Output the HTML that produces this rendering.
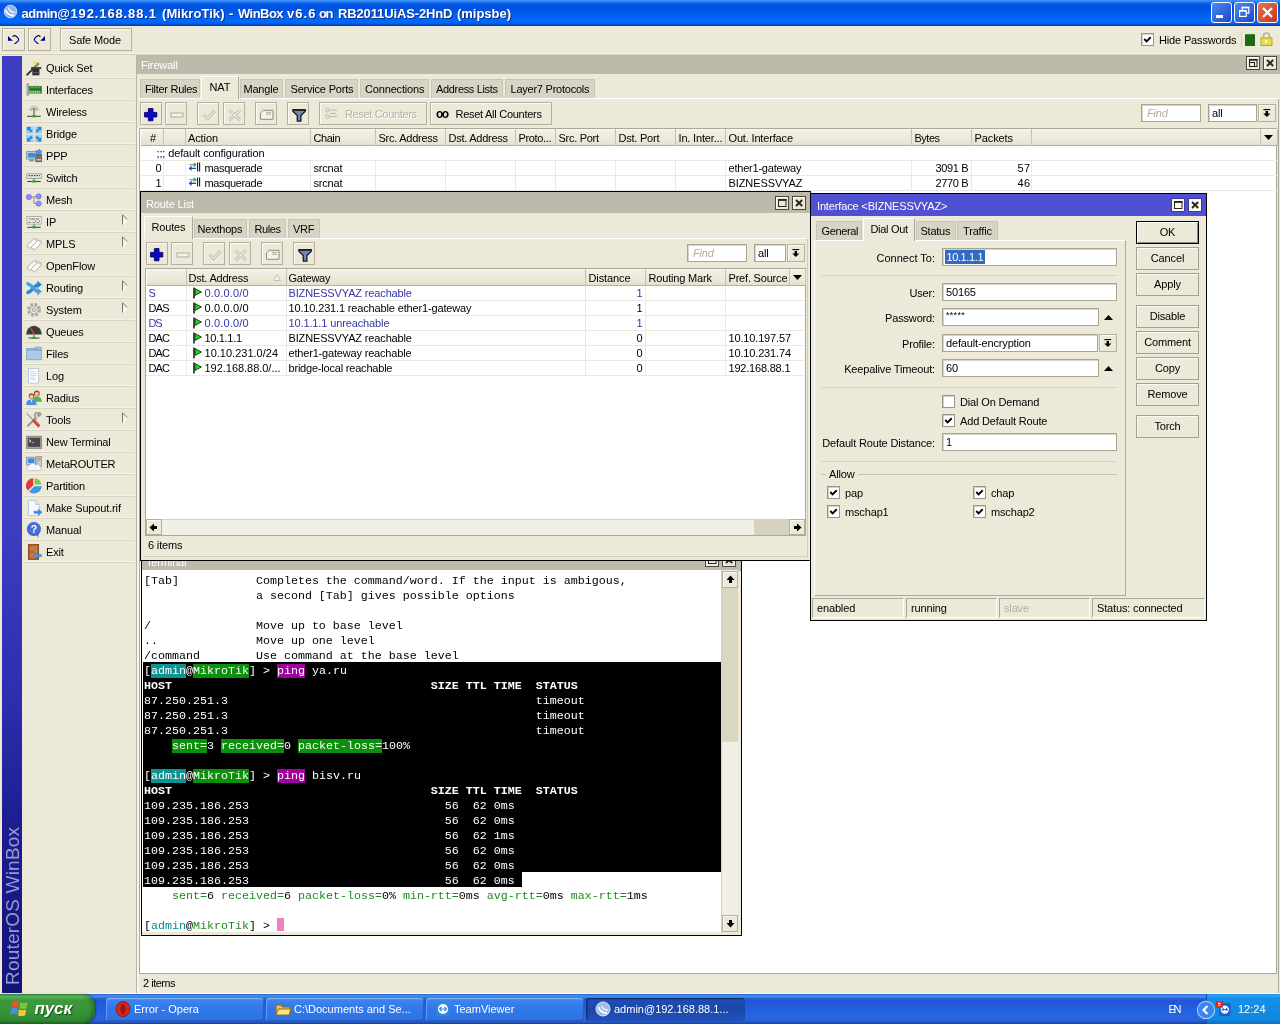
<!DOCTYPE html>
<html><head><meta charset='utf-8'><title>WinBox</title><style>
*{box-sizing:border-box;margin:0;padding:0}
html,body{width:1280px;height:1024px;overflow:hidden;background:#ECE9D8}
body{font-family:"Liberation Sans",sans-serif;font-size:11px;letter-spacing:-0.15px;color:#000;position:relative}
.a{position:absolute;white-space:nowrap}
.t{position:absolute;white-space:nowrap;line-height:14px;height:14px}
.btn{position:absolute;background:#ECE9D8;border:1px solid;border-color:#fff #8E8B7C #8E8B7C #fff;box-shadow:0 0 0 1px #ACA899 inset}
.btn2{position:absolute;background:#ECE9D8;border:1px solid #B3B0A0;box-shadow:inset 1px 1px 0 #FBFAF5}
.inp{position:absolute;background:#fff;border:1px solid #A8A595;box-shadow:inset 1px 1px 0 #d8d5c6}
.tab{position:absolute;background:#D8D4C4;border:1px solid #C9C5B4;border-bottom:none;text-align:center;line-height:17px;color:#000}
.tabA{position:absolute;background:#ECE9D8;border:1px solid #fff;border-right-color:#ACA899;border-bottom:none;text-align:center;line-height:18px}
.hdr{position:absolute;height:17px;background:linear-gradient(#FBFAF4 0,#F1EFE3 2px,#ECE9D8 65%,#E3E0CF 100%);border-right:1px solid #C5C2B2;border-bottom:1px solid #B5B2A3;line-height:17px;padding-left:3px;white-space:nowrap;overflow:hidden}
.mono{font-family:"Liberation Mono",monospace;font-size:11.667px;letter-spacing:0}
.wt{position:absolute;color:#fff;line-height:18px;white-space:nowrap}
.cb{position:absolute;width:13px;height:13px;background:#fff;border:1px solid #97948A;box-shadow:inset 1px 1px 0 #d5d2c6}
</style></head><body><div id='root' style='position:absolute;left:0;top:0;width:1280px;height:1024px;overflow:hidden;will-change:transform'>
<div class='a' style='left:0px;top:0px;width:1280px;height:26px;background:linear-gradient(to bottom,#3D95FF 0px,#2A80F5 2px,#0A5CE0 3.5px,#0054E3 6px,#0054E3 10px,#0160F2 15px,#0468FA 20px,#0365F5 23px,#0340B8 25.5px,#0340B8 26px)'></div>
<div class='a' style='left:0px;top:26px;width:1280px;height:1px;background:#F8F7FC'></div>
<svg class='a' style='left:2px;top:3px' width='18' height='18' viewBox='0 0 18 18'><circle cx='8.5' cy='8.5' r='6.3' fill='#8DB3EA' stroke='#C9DCF5' stroke-width='1'/><path d='M3.5 7 Q5.5 12.5 12 12.5' stroke='#fff' stroke-width='1.8' fill='none'/><path d='M6.5 4.5 Q7.5 9.5 13.5 9.5' stroke='#eaf1fb' stroke-width='1.4' fill='none'/></svg>
<div class='t' style='left:21.5px;top:6px;font-size:13px;letter-spacing:-0.492px;font-weight:bold;color:#fff;line-height:16px;height:16px;text-shadow:1px 1px 0 #0b2f8a;'>admin@</div>
<div class='t' style='left:70.5px;top:6px;font-size:13px;letter-spacing:0.872px;font-weight:bold;color:#fff;line-height:16px;height:16px;text-shadow:1px 1px 0 #0b2f8a;'>192.168.88.1</div>
<div class='t' style='left:162px;top:6px;font-size:13px;letter-spacing:0.069px;font-weight:bold;color:#fff;line-height:16px;height:16px;text-shadow:1px 1px 0 #0b2f8a;'>(MikroTik)</div>
<div class='t' style='left:229px;top:6px;font-size:13px;letter-spacing:1.171px;font-weight:bold;color:#fff;line-height:16px;height:16px;text-shadow:1px 1px 0 #0b2f8a;'>-</div>
<div class='t' style='left:238px;top:6px;font-size:13px;letter-spacing:-0.554px;font-weight:bold;color:#fff;line-height:16px;height:16px;text-shadow:1px 1px 0 #0b2f8a;'>WinBox</div>
<div class='t' style='left:287px;top:6px;font-size:13px;letter-spacing:1.066px;font-weight:bold;color:#fff;line-height:16px;height:16px;text-shadow:1px 1px 0 #0b2f8a;'>v6.6</div>
<div class='t' style='left:319px;top:6px;font-size:13px;letter-spacing:-1.382px;font-weight:bold;color:#fff;line-height:16px;height:16px;text-shadow:1px 1px 0 #0b2f8a;'>on</div>
<div class='t' style='left:338px;top:6px;font-size:13px;letter-spacing:-0.130px;font-weight:bold;color:#fff;line-height:16px;height:16px;text-shadow:1px 1px 0 #0b2f8a;'>RB2011UiAS-2HnD</div>
<div class='t' style='left:457px;top:6px;font-size:13px;letter-spacing:-0.024px;font-weight:bold;color:#fff;line-height:16px;height:16px;text-shadow:1px 1px 0 #0b2f8a;'>(mipsbe)</div>
<div class='a' style='left:1211px;top:2px;width:21px;height:21px;border:1px solid #fff;border-radius:3px;background:linear-gradient(135deg,#4C8AF0,#1E47C8)'><svg width='19' height='19' viewBox='0 0 19 19' style='position:absolute;left:0;top:0'><rect x='4' y='12' width='7' height='3' fill='#fff'/></svg></div>
<div class='a' style='left:1234px;top:2px;width:21px;height:21px;border:1px solid #fff;border-radius:3px;background:linear-gradient(135deg,#4C8AF0,#1E47C8)'><svg width='19' height='19' viewBox='0 0 19 19' style='position:absolute;left:0;top:0'><path d='M7.2 7V4.6h6.6v5.6h-2.4' fill='none' stroke='#fff' stroke-width='1.2'/><path d='M6.6 4.4h7.8' stroke='#fff' stroke-width='1.6'/><rect x='4.6' y='7.8' width='6.6' height='5.6' fill='none' stroke='#fff' stroke-width='1.2'/><path d='M4 7.8h7.8' stroke='#fff' stroke-width='1.6'/></svg></div>
<div class='a' style='left:1257px;top:2px;width:21px;height:21px;border:1px solid #fff;border-radius:3px;background:linear-gradient(135deg,#E8754F,#C4361A)'><svg width='19' height='19' viewBox='0 0 19 19' style='position:absolute;left:0;top:0'><path d='M5 5 L14 14 M14 5 L5 14' stroke='#fff' stroke-width='2.2'/></svg></div>
<div class='a' style='left:0px;top:26px;width:1280px;height:29px;background:#ECE9D8'></div>
<div class='a' style='left:0px;top:54px;width:1280px;height:1px;background:#D2CFBF'></div>
<div class='a' style='left:0px;top:53px;width:1280px;height:1px;background:#F6F4EA'></div>
<div class='btn2' style='left:2px;top:28px;width:23px;height:23px;'></div>
<div class='btn2' style='left:28px;top:28px;width:23px;height:23px;'></div>
<div class='btn2' style='left:60px;top:28px;width:72px;height:23px;'></div>
<svg class='a' style='left:6px;top:33px' width='14' height='14' viewBox='0 0 14 14'><path d='M2 3v4.8h4.8z' fill='#000080'/><path d='M6.6 3.7Q8.5 1.6 10.6 3.7L12.2 5.4Q13.2 6.6 12.2 7.8L9.4 10.5h-1' fill='none' stroke='#000080' stroke-width='1.15'/></svg>
<svg class='a' style='left:32px;top:33px' width='14' height='14' viewBox='0 0 14 14'><path d='M13 3v4.8H8.2z' fill='#000080'/><path d='M8.4 3.7Q6.5 1.6 4.4 3.7L2.8 5.4Q1.8 6.6 2.8 7.8L5.6 10.5h1' fill='none' stroke='#000080' stroke-width='1.15'/></svg>
<div class='t' style='left:69px;top:33px;'>Safe Mode</div>
<div class='cb' style='left:1141px;top:33px'><svg width='11' height='11' viewBox='0 0 12 12' style='position:absolute;left:0;top:0'><path d='M2.5 5.5 L5 8 L9.5 3.5' fill='none' stroke='#000' stroke-width='2.1'/></svg></div>
<div class='t' style='left:1159px;top:33px;'>Hide Passwords</div>
<div class='a' style='left:1241px;top:31px;width:1px;height:17px;background:#D5D2C2'></div>
<div class='a' style='left:1245px;top:34px;width:10px;height:12px;background:#1E6A12;border-top:1px solid #3c8a2c'></div>
<svg class='a' style='left:1260px;top:32px' width='13' height='14' viewBox='0 0 13 14'><path d='M3.5 6 V4 A3 3 0 0 1 9.5 4 V6' fill='none' stroke='#b9b48a' stroke-width='1.6'/><rect x='1' y='6' width='11' height='7.5' fill='#E9DE4A' stroke='#b5a62a' stroke-width='1'/><rect x='5' y='8' width='2' height='3' fill='#fff8c0'/></svg>
<div class='a' style='left:0px;top:55px;width:137px;height:939px;background:#ECE9D8'></div>
<div class='a' style='left:2px;top:56px;width:20px;height:937px;background:linear-gradient(#3D3DC0 0%,#3D3DC0 50%,#2E2EB0 68%,#1D1D92 82%,#13137A 100%)'></div>
<div class='a' style='left:2px;top:993px;width:0;height:0'><div style='position:absolute;transform-origin:0 0;transform:rotate(-90deg);left:2px;top:-8px;font-size:19px;letter-spacing:0.2px;color:#9A9CCB;white-space:nowrap;line-height:18px'>RouterOS WinBox</div></div>
<div class='a' style='left:136px;top:55px;width:1px;height:939px;background:#B8B5A6'></div>
<div class='a' style='left:24px;top:78px;width:111px;height:1px;background:#D9D6C6'></div>
<div class='a' style='left:24px;top:77px;width:111px;height:1px;background:#F3F1E6'></div>
<svg class='a' style='left:26px;top:60px' width='16' height='16' viewBox='0 0 16 16'><path d='M6.3 8.5h7.1v6.8h-7.1z' fill='#2e2e2e'/><path d='M6.3 12h7.1v1.2h-7.1z' fill='#5a5a5a'/><path d='M5 7.2h10.3v1.6H5z' fill='#222'/><path d='M0.6 15.2L12.6 3.2' stroke='#3a3a32' stroke-width='2'/><path d='M8.5 7.3L12.6 3.2' stroke='#8a8468' stroke-width='2'/><path d='M9 0l.8 1.8 1.9.3-1.4 1.3.3 1.9L9 4.4l-1.6.9.3-1.9L6.3 2.1l1.9-.3z' fill='#f0e060'/><circle cx='13.2' cy='1.5' r='0.8' fill='#f5ee9a'/></svg>
<div class='t' style='left:46px;top:61px;'>Quick Set</div>
<div class='a' style='left:24px;top:100px;width:111px;height:1px;background:#D9D6C6'></div>
<div class='a' style='left:24px;top:99px;width:111px;height:1px;background:#F3F1E6'></div>
<svg class='a' style='left:26px;top:82px' width='16' height='16' viewBox='0 0 16 16'><path d='M0.9 1.7h1.8v11.6H0.9z' fill='#b9b9b2' stroke='#8a8a84' stroke-width='0.6'/><path d='M2.7 3.9H16v7.7H2.7z' fill='#3f9a3f'/><path d='M3.7 5h11.3v3.6H3.7z' fill='#2c6e2c'/><path d='M4.2 8.9v1.8M6 8.9v1.8M7.8 8.9v1.8M9.6 8.9v1.8M11.4 8.9v1.8M13.2 8.9v1.8' stroke='#b5e3b0' stroke-width='1'/><path d='M5 5.6h2M8.4 5.6h2M11.8 5.6h2' stroke='#6fb56f' stroke-width='1.2'/></svg>
<div class='t' style='left:46px;top:83px;'>Interfaces</div>
<div class='a' style='left:24px;top:122px;width:111px;height:1px;background:#D9D6C6'></div>
<div class='a' style='left:24px;top:121px;width:111px;height:1px;background:#F3F1E6'></div>
<svg class='a' style='left:26px;top:104px' width='16' height='16' viewBox='0 0 16 16'><path d='M3 6.2Q8 -1.2 13 6.2' fill='none' stroke='#c4c4bc' stroke-width='1.3'/><path d='M5 6.6Q8 2.2 11 6.6' fill='none' stroke='#9a9a92' stroke-width='1.2'/><path d='M8 4.5v7' stroke='#7c7c74' stroke-width='1.5'/><path d='M1.2 12.3h13.5' stroke='#3c3c34' stroke-width='1'/><ellipse cx='8' cy='12.2' rx='2.6' ry='1.3' fill='#35a535'/></svg>
<div class='t' style='left:46px;top:105px;'>Wireless</div>
<div class='a' style='left:24px;top:144px;width:111px;height:1px;background:#D9D6C6'></div>
<div class='a' style='left:24px;top:143px;width:111px;height:1px;background:#F3F1E6'></div>
<svg class='a' style='left:26px;top:126px' width='16' height='16' viewBox='0 0 16 16'><rect x='0.2' y='0.4' width='7.2' height='7.2' fill='#9ad0f7'/><rect x='8.8' y='0.4' width='7.2' height='7.2' fill='#9ad0f7'/><rect x='0.2' y='8.8' width='7.2' height='7.2' fill='#9ad0f7'/><rect x='8.8' y='8.8' width='7.2' height='7.2' fill='#9ad0f7'/><path d='M1 1h4L3.8 2.3 6.6 5 5 6.6 2.3 3.8 1 5z' fill='#2b86d6'/><path d='M15.2 1v4L13.9 3.8 11.2 6.6 9.6 5 12.4 2.3 11.2 1z' fill='#2b86d6'/><path d='M1 15.4v-4l1.3 1.2L5 9.8 6.6 11.4 3.8 14.1 5 15.4z' fill='#2b86d6'/><path d='M15.2 15.4h-4l1.2-1.3L9.6 11.4 11.2 9.8 13.9 12.6 15.2 11.4z' fill='#2b86d6'/></svg>
<div class='t' style='left:46px;top:127px;'>Bridge</div>
<div class='a' style='left:24px;top:166px;width:111px;height:1px;background:#D9D6C6'></div>
<div class='a' style='left:24px;top:165px;width:111px;height:1px;background:#F3F1E6'></div>
<svg class='a' style='left:26px;top:148px' width='16' height='16' viewBox='0 0 16 16'><rect x='0.6' y='3.6' width='9.6' height='7.4' fill='#d6dbe2' stroke='#7c8794' stroke-width='0.8'/><rect x='1.8' y='4.8' width='7.2' height='4.8' fill='#3c8ce0'/><rect x='3.2' y='11.2' width='4.6' height='2.2' fill='#8a8f96'/><rect x='9.8' y='6' width='6' height='7.8' fill='#6d7278' stroke='#4a4e54' stroke-width='0.6'/><rect x='10.6' y='11' width='4.4' height='1.4' fill='#c9ccd0'/><path d='M10 5V2.6h3V1l3 2.8-3 2.8V5z' fill='#4a9af0' stroke='#2a6cc0' stroke-width='0.5'/></svg>
<div class='t' style='left:46px;top:149px;'>PPP</div>
<div class='a' style='left:24px;top:188px;width:111px;height:1px;background:#D9D6C6'></div>
<div class='a' style='left:24px;top:187px;width:111px;height:1px;background:#F3F1E6'></div>
<svg class='a' style='left:26px;top:170px' width='16' height='16' viewBox='0 0 16 16'><rect x='0.9' y='3.9' width='14.4' height='4.5' fill='#f4f4f0' stroke='#9a9a92' stroke-width='0.9'/><path d='M2.6 5.6h1.6M5.2 5.6h1.6M7.8 5.6h1.6M10.4 5.6h1.6M13 5.6h1' stroke='#44443c' stroke-width='1.3'/><path d='M2.6 7.2h11' stroke='#d0d0c8' stroke-width='0.8'/><path d='M8 8.6v2.4' stroke='#7c7c74' stroke-width='1.3'/><path d='M1.2 11.5h13.5' stroke='#3c3c34' stroke-width='1'/><ellipse cx='8' cy='11.5' rx='2.4' ry='1.2' fill='#35a535'/></svg>
<div class='t' style='left:46px;top:171px;'>Switch</div>
<div class='a' style='left:24px;top:210px;width:111px;height:1px;background:#D9D6C6'></div>
<div class='a' style='left:24px;top:209px;width:111px;height:1px;background:#F3F1E6'></div>
<svg class='a' style='left:26px;top:192px' width='16' height='16' viewBox='0 0 16 16'><path d='M5 5h3v6.5h2.4M8 4.6h2.6' fill='none' stroke='#8a8a84' stroke-width='1'/><circle cx='2.9' cy='5' r='2.6' fill='#8e8ef4' stroke='#6c6cd6' stroke-width='0.7'/><circle cx='12.6' cy='4.4' r='2.6' fill='#8e8ef4' stroke='#6c6cd6' stroke-width='0.7'/><circle cx='12.6' cy='11.6' r='2.6' fill='#8e8ef4' stroke='#6c6cd6' stroke-width='0.7'/></svg>
<div class='t' style='left:46px;top:193px;'>Mesh</div>
<div class='a' style='left:24px;top:232px;width:111px;height:1px;background:#D9D6C6'></div>
<div class='a' style='left:24px;top:231px;width:111px;height:1px;background:#F3F1E6'></div>
<svg class='a' style='left:26px;top:214px' width='16' height='16' viewBox='0 0 16 16'><rect x='0.9' y='2.6' width='14.4' height='7.5' fill='#f6f6f2' stroke='#a4a49c' stroke-width='0.9'/><text x='8.1' y='9' font-size='7.2' text-anchor='middle' font-family='Liberation Sans' fill='#6a6a64' letter-spacing='0'>255</text><path d='M8 10.3v2.6' stroke='#7c7c74' stroke-width='1.3'/><path d='M1.2 13.3h13.5' stroke='#3c3c34' stroke-width='1'/><ellipse cx='8' cy='13.3' rx='2.4' ry='1.2' fill='#35a535'/></svg>
<div class='t' style='left:46px;top:215px;'>IP</div>
<svg class='a' style='left:121px;top:214px' width='7' height='12' viewBox='0 0 7 12'><path d='M1.5 1L1.5 10.5L6 5.7Z' fill='#F6F4EA'/><path d='M1.5 10.8L6.2 5.8' stroke='#fff' stroke-width='1.1'/><path d='M1.5 10.6V0.8L6.2 5.6' fill='none' stroke='#76736a' stroke-width='1'/></svg>
<div class='a' style='left:24px;top:254px;width:111px;height:1px;background:#D9D6C6'></div>
<div class='a' style='left:24px;top:253px;width:111px;height:1px;background:#F3F1E6'></div>
<svg class='a' style='left:26px;top:236px' width='16' height='16' viewBox='0 0 16 16'><path d='M0.9 9.7L8.2 2.5l3 1v2L4.4 12.6z' fill='#fbfbf8' stroke='#a8a8a0' stroke-width='0.9'/><path d='M5 11.2L12.3 4l3 1v2L8.5 14.1z' fill='#fbfbf8' stroke='#a8a8a0' stroke-width='0.9'/><circle cx='9.6' cy='4.2' r='0.7' fill='#c8c8c0'/><circle cx='13.6' cy='5.7' r='0.7' fill='#c8c8c0'/></svg>
<div class='t' style='left:46px;top:237px;'>MPLS</div>
<svg class='a' style='left:121px;top:236px' width='7' height='12' viewBox='0 0 7 12'><path d='M1.5 1L1.5 10.5L6 5.7Z' fill='#F6F4EA'/><path d='M1.5 10.8L6.2 5.8' stroke='#fff' stroke-width='1.1'/><path d='M1.5 10.6V0.8L6.2 5.6' fill='none' stroke='#76736a' stroke-width='1'/></svg>
<div class='a' style='left:24px;top:276px;width:111px;height:1px;background:#D9D6C6'></div>
<div class='a' style='left:24px;top:275px;width:111px;height:1px;background:#F3F1E6'></div>
<svg class='a' style='left:26px;top:258px' width='16' height='16' viewBox='0 0 16 16'><path d='M0.9 9.7L8.2 2.5l3 1v2L4.4 12.6z' fill='#fbfbf8' stroke='#a8a8a0' stroke-width='0.9'/><path d='M5 11.2L12.3 4l3 1v2L8.5 14.1z' fill='#fbfbf8' stroke='#a8a8a0' stroke-width='0.9'/><circle cx='9.6' cy='4.2' r='0.7' fill='#c8c8c0'/><circle cx='13.6' cy='5.7' r='0.7' fill='#c8c8c0'/></svg>
<div class='t' style='left:46px;top:259px;'>OpenFlow</div>
<div class='a' style='left:24px;top:298px;width:111px;height:1px;background:#D9D6C6'></div>
<div class='a' style='left:24px;top:297px;width:111px;height:1px;background:#F3F1E6'></div>
<svg class='a' style='left:26px;top:280px' width='16' height='16' viewBox='0 0 16 16'><path d='M0.5 12.6C6 12.6 8 4.6 12.4 4.6' fill='none' stroke='#2c86d8' stroke-width='3.4'/><path d='M11.2 0.8L16 4.6 11.2 8.4z' fill='#2c86d8'/><path d='M0.5 3.6C6 3.6 8 11.6 12.4 11.6' fill='none' stroke='#46a0ea' stroke-width='3.4'/><path d='M11.2 7.8L16 11.6 11.2 15.4z' fill='#46a0ea'/></svg>
<div class='t' style='left:46px;top:281px;'>Routing</div>
<svg class='a' style='left:121px;top:280px' width='7' height='12' viewBox='0 0 7 12'><path d='M1.5 1L1.5 10.5L6 5.7Z' fill='#F6F4EA'/><path d='M1.5 10.8L6.2 5.8' stroke='#fff' stroke-width='1.1'/><path d='M1.5 10.6V0.8L6.2 5.6' fill='none' stroke='#76736a' stroke-width='1'/></svg>
<div class='a' style='left:24px;top:320px;width:111px;height:1px;background:#D9D6C6'></div>
<div class='a' style='left:24px;top:319px;width:111px;height:1px;background:#F3F1E6'></div>
<svg class='a' style='left:26px;top:302px' width='16' height='16' viewBox='0 0 16 16'><circle cx='8' cy='7.8' r='5.4' fill='none' stroke='#a9a9a4' stroke-width='3.2' stroke-dasharray='2.6 1.64'/><circle cx='8' cy='7.8' r='4.6' fill='#b4b4ae'/><circle cx='8' cy='7.8' r='3.4' fill='#e9e9e4'/><circle cx='8' cy='7.8' r='1.7' fill='#ECE9D8' stroke='#9a9a94' stroke-width='0.9'/></svg>
<div class='t' style='left:46px;top:303px;'>System</div>
<svg class='a' style='left:121px;top:302px' width='7' height='12' viewBox='0 0 7 12'><path d='M1.5 1L1.5 10.5L6 5.7Z' fill='#F6F4EA'/><path d='M1.5 10.8L6.2 5.8' stroke='#fff' stroke-width='1.1'/><path d='M1.5 10.6V0.8L6.2 5.6' fill='none' stroke='#76736a' stroke-width='1'/></svg>
<div class='a' style='left:24px;top:342px;width:111px;height:1px;background:#D9D6C6'></div>
<div class='a' style='left:24px;top:341px;width:111px;height:1px;background:#F3F1E6'></div>
<svg class='a' style='left:26px;top:324px' width='16' height='16' viewBox='0 0 16 16'><path d='M0.2 10.4A7.8 8.6 0 0 1 15.8 10.4z' fill='#3a3a38'/><path d='M1.5 9.2A6.5 7 0 0 1 14.5 9.2' fill='none' stroke='#6a6a66' stroke-width='0.8' stroke-dasharray='1 1.4'/><path d='M8 10L5 4.5' stroke='#e24a3a' stroke-width='1.2'/><path d='M8 10.6v2.6' stroke='#7c7c74' stroke-width='1.3'/><path d='M2.5 14h11' stroke='#3c3c34' stroke-width='1'/><ellipse cx='8' cy='13.9' rx='2.4' ry='1.2' fill='#35a535'/></svg>
<div class='t' style='left:46px;top:325px;'>Queues</div>
<div class='a' style='left:24px;top:364px;width:111px;height:1px;background:#D9D6C6'></div>
<div class='a' style='left:24px;top:363px;width:111px;height:1px;background:#F3F1E6'></div>
<svg class='a' style='left:26px;top:346px' width='16' height='16' viewBox='0 0 16 16'><path d='M9 1h6.4v3H9z' fill='#9dbfe4' stroke='#7ea2cc' stroke-width='0.6'/><path d='M0.3 2.6h9l1.2 1.4h5.2v9.7H0.3z' fill='#8fb4de' stroke='#6f94c2' stroke-width='0.7'/><path d='M0.7 5h14.6v8.3H0.7z' fill='#a9c8ea'/></svg>
<div class='t' style='left:46px;top:347px;'>Files</div>
<div class='a' style='left:24px;top:386px;width:111px;height:1px;background:#D9D6C6'></div>
<div class='a' style='left:24px;top:385px;width:111px;height:1px;background:#F3F1E6'></div>
<svg class='a' style='left:26px;top:368px' width='16' height='16' viewBox='0 0 16 16'><path d='M2.4 0.5h10.2v14.3l-1.3 0.9-1.3-0.9-1.3 0.9-1.3-0.9-1.3 0.9-1.3-0.9-1.2 0.9-1.2-0.9z' fill='#fafcfe' stroke='#a8c0d6' stroke-width='0.8'/><path d='M4.2 3.5h5M4.2 5.5h6.4M4.2 7.5h6.4M4.2 9.5h4.6M4.2 11.5h5.6' stroke='#c0d2e2' stroke-width='0.9'/></svg>
<div class='t' style='left:46px;top:369px;'>Log</div>
<div class='a' style='left:24px;top:408px;width:111px;height:1px;background:#D9D6C6'></div>
<div class='a' style='left:24px;top:407px;width:111px;height:1px;background:#F3F1E6'></div>
<svg class='a' style='left:26px;top:390px' width='16' height='16' viewBox='0 0 16 16'><circle cx='10.8' cy='3.4' r='2.9' fill='#b5402c'/><circle cx='10.8' cy='4' r='1.9' fill='#f0c8a0'/><path d='M6.6 11.8Q6.6 6.6 10.8 6.6 15.8 6.6 15.8 11.8z' fill='#57b050'/><circle cx='5.4' cy='6' r='2.8' fill='#8a5a2c'/><circle cx='5.4' cy='6.6' r='1.9' fill='#f0c8a0'/><path d='M0.2 15Q0.2 9.6 5.4 9.6 10.6 9.6 10.6 15z' fill='#4a90d8'/><path d='M4.6 10h1.6l-.8 3z' fill='#e8f0fa'/></svg>
<div class='t' style='left:46px;top:391px;'>Radius</div>
<div class='a' style='left:24px;top:430px;width:111px;height:1px;background:#D9D6C6'></div>
<div class='a' style='left:24px;top:429px;width:111px;height:1px;background:#F3F1E6'></div>
<svg class='a' style='left:26px;top:412px' width='16' height='16' viewBox='0 0 16 16'><path d='M1.4 14.2L10.6 5.4' stroke='#9c9c96' stroke-width='2.2'/><path d='M10 6.2A3.2 3.2 0 1 1 14.8 2.2L12.6 4.2 11.6 3.2 13.4 1.2' fill='none' stroke='#9c9c96' stroke-width='1.6'/><path d='M0.8 1.6L7 7.8' stroke='#a8a8a2' stroke-width='1.4'/><path d='M7 7.8L13.4 14.4' stroke='#d8342c' stroke-width='3'/><path d='M7.6 7.6L13.6 13.8' stroke='#f07a70' stroke-width='0.8'/></svg>
<div class='t' style='left:46px;top:413px;'>Tools</div>
<svg class='a' style='left:121px;top:412px' width='7' height='12' viewBox='0 0 7 12'><path d='M1.5 1L1.5 10.5L6 5.7Z' fill='#F6F4EA'/><path d='M1.5 10.8L6.2 5.8' stroke='#fff' stroke-width='1.1'/><path d='M1.5 10.6V0.8L6.2 5.6' fill='none' stroke='#76736a' stroke-width='1'/></svg>
<div class='a' style='left:24px;top:452px;width:111px;height:1px;background:#D9D6C6'></div>
<div class='a' style='left:24px;top:451px;width:111px;height:1px;background:#F3F1E6'></div>
<svg class='a' style='left:26px;top:434px' width='16' height='16' viewBox='0 0 16 16'><rect x='0.3' y='2.2' width='15.4' height='12.2' fill='#a4a4a0' stroke='#7c7c78' stroke-width='0.7'/><rect x='1.8' y='3.8' width='12.4' height='9' fill='#45454a'/><path d='M3 5.6l2 1.3-2 1.3' stroke='#f0f0f0' stroke-width='0.9' fill='none'/><path d='M5.6 8.6h2.4' stroke='#d0d0d0' stroke-width='0.8'/></svg>
<div class='t' style='left:46px;top:435px;'>New Terminal</div>
<div class='a' style='left:24px;top:474px;width:111px;height:1px;background:#D9D6C6'></div>
<div class='a' style='left:24px;top:473px;width:111px;height:1px;background:#F3F1E6'></div>
<svg class='a' style='left:26px;top:456px' width='16' height='16' viewBox='0 0 16 16'><rect x='0.6' y='1.2' width='9' height='7.6' fill='#d6dbe2' stroke='#7c8794' stroke-width='0.8'/><rect x='1.8' y='2.4' width='6.6' height='4.8' fill='#3c8ce0'/><rect x='10.8' y='0.6' width='5' height='9.6' fill='#c8ccd0' stroke='#84888c' stroke-width='0.7'/><path d='M11.8 2.4h3M11.8 4h3' stroke='#84888c' stroke-width='0.8'/><path d='M2.6 14.6A2.6 2.6 0 0 1 3.4 9.6 3.4 3.4 0 0 1 9.6 9 3 3 0 0 1 14.4 11.4 1.8 1.8 0 0 1 13.6 14.6z' fill='#f4f6fa' stroke='#b0b6c0' stroke-width='0.7'/></svg>
<div class='t' style='left:46px;top:457px;'>MetaROUTER</div>
<div class='a' style='left:24px;top:496px;width:111px;height:1px;background:#D9D6C6'></div>
<div class='a' style='left:24px;top:495px;width:111px;height:1px;background:#F3F1E6'></div>
<svg class='a' style='left:26px;top:478px' width='16' height='16' viewBox='0 0 16 16'><path d='M7.2 7.4L7.2 0.2A7.4 7.4 0 0 0 1.8 12.4z' fill='#e03a38'/><path d='M8.6 6.6L8.6 0.2A7.2 7.2 0 0 1 15.4 6.6z' fill='#7cc84a'/><path d='M8.4 8.2H15.6A7.6 7.6 0 0 1 3 13.6z' fill='#3c9ae0'/></svg>
<div class='t' style='left:46px;top:479px;'>Partition</div>
<div class='a' style='left:24px;top:518px;width:111px;height:1px;background:#D9D6C6'></div>
<div class='a' style='left:24px;top:517px;width:111px;height:1px;background:#F3F1E6'></div>
<svg class='a' style='left:26px;top:500px' width='16' height='16' viewBox='0 0 16 16'><path d='M2.4 0.5h7l4 4v11H2.4z' fill='#f6fafe' stroke='#a8c4de' stroke-width='0.8'/><path d='M9.4 0.5v4h4' fill='#dcebf8' stroke='#a8c4de' stroke-width='0.8'/><path d='M8 11.2h4.4V9.2L16 12.2l-3.6 3V13.2H8z' fill='#3c8ce8' stroke='#2a6cc8' stroke-width='0.5'/></svg>
<div class='t' style='left:46px;top:501px;'>Make Supout.rif</div>
<div class='a' style='left:24px;top:540px;width:111px;height:1px;background:#D9D6C6'></div>
<div class='a' style='left:24px;top:539px;width:111px;height:1px;background:#F3F1E6'></div>
<svg class='a' style='left:26px;top:522px' width='16' height='16' viewBox='0 0 16 16'><path d='M10 12.6l2.6 2.8-.4-3.6z' fill='#3458c4'/><circle cx='7.9' cy='7.1' r='7' fill='#3c62d0'/><circle cx='7.9' cy='6.4' r='5.8' fill='#4a72dc'/><text x='7.9' y='11' font-size='10.5' font-weight='bold' text-anchor='middle' font-family='Liberation Sans' fill='#fff'>?</text></svg>
<div class='t' style='left:46px;top:523px;'>Manual</div>
<div class='a' style='left:24px;top:562px;width:111px;height:1px;background:#D9D6C6'></div>
<div class='a' style='left:24px;top:561px;width:111px;height:1px;background:#F3F1E6'></div>
<svg class='a' style='left:26px;top:544px' width='16' height='16' viewBox='0 0 16 16'><rect x='2.3' y='0.3' width='10.4' height='15.2' fill='#a85a2a' stroke='#7c3e18' stroke-width='0.7'/><rect x='4' y='2' width='7' height='5.4' fill='#c27a42'/><rect x='4' y='8.6' width='7' height='5.6' fill='#c27a42'/><circle cx='10.6' cy='8' r='0.8' fill='#f0d060'/><path d='M15.4 10.4H11V8.8L7 11.5l4 2.7v-1.6h4.4z' fill='#4aa0e8' stroke='#2a70c0' stroke-width='0.5'/></svg>
<div class='t' style='left:46px;top:545px;'>Exit</div>
<div class='a' style='left:137px;top:55px;width:1143px;height:939px;background:#ECE9D8'></div>
<div class='a' style='left:139px;top:128px;width:1138px;height:846px;background:#fff;border:1px solid #ACA899'></div>
<div class='a' style='left:1278px;top:99px;width:1px;height:894px;background:#ACA899'></div>
<div class='a' style='left:137px;top:99px;width:2px;height:894px;background:#F6F5EE'></div>
<div class='t' style='left:143px;top:976px;font-size:11px;letter-spacing:-0.492px;'>2 items</div>
<div class='a' style='left:137px;top:55px;width:1143px;height:19px;background:#BDB9AB'></div>
<div class='t' style='left:141px;top:58px;color:#fff;'>Firewall</div>
<div class='a' style='left:1246px;top:56px;width:14px;height:14px;background:#ECE9D8;border:1px solid #4a483f;box-shadow:inset 1px 1px 0 #fff'>
<svg width='12' height='12' style='position:absolute;left:0;top:0'><rect x='2.5' y='2.5' width='7.5' height='7' fill='none' stroke='#222' stroke-width='1'/><path d='M2 3h8.5' stroke='#222' stroke-width='1.4'/><rect x='2.5' y='5.5' width='5' height='4' fill='#ECE9D8' stroke='#222' stroke-width='1'/></svg>
</div>
<div class='a' style='left:1263px;top:56px;width:14px;height:14px;background:#ECE9D8;border:1px solid #4a483f;box-shadow:inset 1px 1px 0 #fff'>
<svg width='12' height='12' style='position:absolute;left:0;top:0'><path d='M3 3L9.2 9M9.2 3L3 9' stroke='#2a261c' stroke-width='1.9'/></svg>
</div>
<div class='a' style='left:137px;top:74px;width:1143px;height:54px;background:#ECE9D8'></div>
<div class='a' style='left:1278px;top:99px;width:1px;height:29px;background:#ACA899'></div>
<div class='a' style='left:138px;top:98px;width:1141px;height:1px;background:#fff'></div>
<div class='tab' style='left:140px;top:79px;width:60px;height:19px'></div>
<div class='t' style='left:145px;top:82px;font-size:11px;letter-spacing:-0.284px;'>Filter Rules</div>
<div class='tabA' style='left:201px;top:76px;width:38px;height:23px'></div>
<div class='t' style='left:209.5px;top:80px;font-size:11px;letter-spacing:-0.092px;'>NAT</div>
<div class='tab' style='left:240px;top:79px;width:43px;height:19px'></div>
<div class='t' style='left:243.5px;top:82px;font-size:11px;letter-spacing:-0.216px;'>Mangle</div>
<div class='tab' style='left:285px;top:79px;width:73px;height:19px'></div>
<div class='t' style='left:290.5px;top:82px;font-size:11px;letter-spacing:-0.201px;'>Service Ports</div>
<div class='tab' style='left:360px;top:79px;width:69px;height:19px'></div>
<div class='t' style='left:365px;top:82px;font-size:11px;letter-spacing:-0.165px;'>Connections</div>
<div class='tab' style='left:431px;top:79px;width:72px;height:19px'></div>
<div class='t' style='left:436px;top:82px;font-size:11px;letter-spacing:-0.336px;'>Address Lists</div>
<div class='tab' style='left:505px;top:79px;width:90px;height:19px'></div>
<div class='t' style='left:510.5px;top:82px;font-size:11px;letter-spacing:-0.236px;'>Layer7 Protocols</div>
<div class='btn2' style='left:140px;top:102px;width:22px;height:23px'><svg width='16' height='16' style='position:absolute;left:2px;top:3px'><path d='M5.4 2.6h4.6v3.8h3.8v4.6h-3.8v3.8H5.4v-3.8H1.6V6.4h3.8z' fill='#0808C8' stroke='#04046a' stroke-width='0.9'/></svg></div>
<div class='btn2' style='left:165px;top:102px;width:22px;height:23px'><svg width='16' height='16' style='position:absolute;left:2px;top:3px'><rect x='3' y='7' width='12' height='4' fill='#F4F2E6' stroke='#B0AD9E' stroke-width='1'/></svg></div>
<div class='btn2' style='left:197px;top:102px;width:22px;height:23px'><svg width='16' height='16' style='position:absolute;left:2px;top:3px'><path d='M3.4 8.5l4.2 4.2 7-7.8' fill='none' stroke='#B4B1A2' stroke-width='2.8'/><path d='M3.4 8.5l4.2 4.2 7-7.8' fill='none' stroke='#F4F2E6' stroke-width='1.2'/></svg></div>
<div class='btn2' style='left:223px;top:102px;width:22px;height:23px'><svg width='16' height='16' style='position:absolute;left:2px;top:3px'><path d='M3.4 4.3l10.6 9.8M14 4.3L3.4 14.1' fill='none' stroke='#B8B5A6' stroke-width='2.8'/><path d='M3.4 4.3l10.6 9.8M14 4.3L3.4 14.1' fill='none' stroke='#F4F2E6' stroke-width='1.2'/></svg></div>
<div class='btn2' style='left:255px;top:102px;width:22px;height:23px'><svg width='16' height='16' style='position:absolute;left:2px;top:3px'><path d='M2.5 13.3V7L5.4 4.3H15v9z' fill='#F4F2E6' stroke='#8E8B7C' stroke-width='1'/><path d='M8 6.4h5M8 8.2h5' stroke='#A8A596' stroke-width='0.9'/></svg></div>
<div class='btn2' style='left:287px;top:102px;width:22px;height:23px'><svg width='16' height='16' style='position:absolute;left:2px;top:3px'><path d='M2.9 3.6h12.4v1.6L10.9 9.6v5.6H7.3V9.6L2.9 5.2z' fill='#7088AC' stroke='#1c1c24' stroke-width='1.3'/><path d='M3 4h12.2' stroke='#1c1c24' stroke-width='1.6'/></svg></div>
<div class='btn2' style='left:319px;top:102px;width:108px;height:23px;'></div>
<svg class='a' style='left:325px;top:107px' width='12' height='13' viewBox='0 0 12 13'><circle cx='2.5' cy='3' r='1.8' fill='none' stroke='#bab7a8'/><circle cx='2.5' cy='9.5' r='1.8' fill='none' stroke='#bab7a8'/><path d='M5 3h7M5 6.5h6M5 9.5h7' stroke='#bab7a8'/></svg>
<div class='t' style='left:345px;top:107px;font-size:11px;letter-spacing:-0.340px;color:#b4b1a3;text-shadow:1px 1px 0 #fff'>Reset Counters</div>
<div class='btn2' style='left:430px;top:102px;width:122px;height:23px;'></div>
<div class='t' style='left:436px;top:107px;font-size:12px;letter-spacing:-1.660px;font-weight:bold;'>oo</div>
<div class='t' style='left:455.5px;top:107px;font-size:11px;letter-spacing:-0.271px;'>Reset All Counters</div>
<div class='inp' style='left:1141px;top:104px;width:60px;height:18px;'></div>
<div class='t' style='left:1147px;top:106px;font-style:italic;color:#b0ada0;'>Find</div>
<div class='inp' style='left:1208px;top:104px;width:49px;height:18px;'></div>
<div class='t' style='left:1212px;top:106px;'>all</div>
<div class='btn2' style='left:1258px;top:104px;width:18px;height:18px'><svg width='12' height='12' style='position:absolute;left:2px;top:2px'><path d='M2.4 2.6h6.8' stroke='#000' stroke-width='1.1'/><path d='M4.6 4h2.4v2.4h2.4L5.8 10 2.2 6.4h2.4z' fill='#000'/></svg></div>
<div class='hdr' style='left:141px;top:129px;width:23px'></div>
<div class='t' style='left:150px;top:131px;font-size:11px;letter-spacing:-0.118px;'>#</div>
<div class='hdr' style='left:164px;top:129px;width:22px'></div>
<div class='hdr' style='left:186px;top:129px;width:125px'></div>
<div class='t' style='left:188px;top:131px;font-size:11px;letter-spacing:-0.114px;'>Action</div>
<div class='hdr' style='left:311px;top:129px;width:65px'></div>
<div class='t' style='left:313.5px;top:131px;font-size:11px;letter-spacing:-0.435px;'>Chain</div>
<div class='hdr' style='left:376px;top:129px;width:70px'></div>
<div class='t' style='left:378.5px;top:131px;font-size:11px;letter-spacing:-0.260px;'>Src. Address</div>
<div class='hdr' style='left:446px;top:129px;width:70px'></div>
<div class='t' style='left:448.5px;top:131px;font-size:11px;letter-spacing:-0.260px;'>Dst. Address</div>
<div class='hdr' style='left:516px;top:129px;width:40px'></div>
<div class='t' style='left:518.5px;top:131px;font-size:11px;letter-spacing:-0.351px;'>Proto...</div>
<div class='hdr' style='left:556px;top:129px;width:60px'></div>
<div class='t' style='left:558.5px;top:131px;font-size:11px;letter-spacing:-0.286px;'>Src. Port</div>
<div class='hdr' style='left:616px;top:129px;width:60px'></div>
<div class='t' style='left:618.5px;top:131px;font-size:11px;letter-spacing:-0.223px;'>Dst. Port</div>
<div class='hdr' style='left:676px;top:129px;width:50px'></div>
<div class='t' style='left:678.5px;top:131px;font-size:11px;letter-spacing:-0.169px;'>In. Inter...</div>
<div class='hdr' style='left:726px;top:129px;width:186px'></div>
<div class='t' style='left:728.5px;top:131px;font-size:11px;letter-spacing:-0.165px;'>Out. Interface</div>
<div class='hdr' style='left:912px;top:129px;width:60px'></div>
<div class='t' style='left:914.5px;top:131px;font-size:11px;letter-spacing:-0.503px;'>Bytes</div>
<div class='hdr' style='left:972px;top:129px;width:60px'></div>
<div class='t' style='left:974.5px;top:131px;font-size:11px;letter-spacing:-0.105px;'>Packets</div>
<div class='hdr' style='left:1032px;top:129px;width:229px'></div>
<div class='hdr' style='left:1261px;top:129px;width:17px'></div>
<svg class='a' style='left:1264px;top:135px' width='9' height='6' viewBox='0 0 9 6'><path d='M0 0h9L4.5 5z' fill='#000'/></svg>
<div class='a' style='left:141px;top:160px;width:1136px;height:1px;background:#ECEAE0'></div>
<div class='a' style='left:141px;top:175px;width:1136px;height:1px;background:#ECEAE0'></div>
<div class='a' style='left:141px;top:190px;width:1136px;height:1px;background:#ECEAE0'></div>
<div class='a' style='left:163px;top:160px;width:1px;height:31px;background:#ECEAE0'></div>
<div class='a' style='left:185px;top:160px;width:1px;height:31px;background:#ECEAE0'></div>
<div class='a' style='left:310px;top:160px;width:1px;height:31px;background:#ECEAE0'></div>
<div class='a' style='left:375px;top:160px;width:1px;height:31px;background:#ECEAE0'></div>
<div class='a' style='left:445px;top:160px;width:1px;height:31px;background:#ECEAE0'></div>
<div class='a' style='left:515px;top:160px;width:1px;height:31px;background:#ECEAE0'></div>
<div class='a' style='left:555px;top:160px;width:1px;height:31px;background:#ECEAE0'></div>
<div class='a' style='left:615px;top:160px;width:1px;height:31px;background:#ECEAE0'></div>
<div class='a' style='left:675px;top:160px;width:1px;height:31px;background:#ECEAE0'></div>
<div class='a' style='left:725px;top:160px;width:1px;height:31px;background:#ECEAE0'></div>
<div class='a' style='left:911px;top:160px;width:1px;height:31px;background:#ECEAE0'></div>
<div class='a' style='left:971px;top:160px;width:1px;height:31px;background:#ECEAE0'></div>
<div class='a' style='left:1031px;top:160px;width:1px;height:31px;background:#ECEAE0'></div>
<div class='t' style='left:156.5px;top:146px;font-size:11px;letter-spacing:-0.137px;'>;;; default configuration</div>
<div class='t' style='left:155.5px;top:161px;font-size:11px;letter-spacing:-0.118px;'>0</div>
<svg class='a' style='left:189px;top:162px' width='14' height='12' viewBox='0 0 14 12'><path d='M0.3 2.8h6.6M4.6 0.9l2.3 1.9-2.3 1.9' stroke='#2c9a50' stroke-width='1.1' fill='none'/><path d='M7 6.4H0.4M2.7 4.5L0.4 6.4l2.3 1.9' stroke='#1c44b4' stroke-width='1.1' fill='none'/><path d='M8.6 0.6v9M10.6 0.6v9' stroke='#1a1a1a' stroke-width='1.1'/></svg>
<div class='t' style='left:204.5px;top:161px;font-size:11px;letter-spacing:-0.350px;'>masquerade</div>
<div class='t' style='left:313.5px;top:161px;font-size:11px;letter-spacing:-0.191px;'>srcnat</div>
<div class='t' style='left:728.5px;top:161px;font-size:11px;letter-spacing:-0.217px;'>ether1-gateway</div>
<div class='t' style='left:935.5px;top:161px;font-size:11px;letter-spacing:-0.373px;'>3091 B</div>
<div class='t' style='left:1017.5px;top:161px;font-size:11px;letter-spacing:0.265px;'>57</div>
<div class='t' style='left:155.5px;top:176px;font-size:11px;letter-spacing:-0.118px;'>1</div>
<svg class='a' style='left:189px;top:177px' width='14' height='12' viewBox='0 0 14 12'><path d='M0.3 2.8h6.6M4.6 0.9l2.3 1.9-2.3 1.9' stroke='#2c9a50' stroke-width='1.1' fill='none'/><path d='M7 6.4H0.4M2.7 4.5L0.4 6.4l2.3 1.9' stroke='#1c44b4' stroke-width='1.1' fill='none'/><path d='M8.6 0.6v9M10.6 0.6v9' stroke='#1a1a1a' stroke-width='1.1'/></svg>
<div class='t' style='left:204.5px;top:176px;font-size:11px;letter-spacing:-0.350px;'>masquerade</div>
<div class='t' style='left:313.5px;top:176px;font-size:11px;letter-spacing:-0.191px;'>srcnat</div>
<div class='t' style='left:728.5px;top:176px;font-size:11px;letter-spacing:-0.098px;'>BIZNESSVYAZ</div>
<div class='t' style='left:935.5px;top:176px;font-size:11px;letter-spacing:-0.373px;'>2770 B</div>
<div class='t' style='left:1017.5px;top:176px;font-size:11px;letter-spacing:0.265px;'>46</div>
<div class='a' style='left:141px;top:553px;width:601px;height:383px;background:#ECE9D8;border:1px solid #000'></div>
<div class='a' style='left:142px;top:554px;width:599px;height:17px;background:#BDB9AB'></div>
<div class='t' style='left:146px;top:555px;color:#fff'>Terminal</div>
<div class='a' style='left:705px;top:553px;width:14px;height:14px;background:#ECE9D8;border:1px solid #4a483f;box-shadow:inset 1px 1px 0 #fff'>
<svg width='12' height='12' style='position:absolute;left:0;top:0'><rect x='2.5' y='2.5' width='7.5' height='7' fill='none' stroke='#2a261c' stroke-width='1'/><path d='M2 3h8.5' stroke='#2a261c' stroke-width='1.8'/></svg>
</div>
<div class='a' style='left:722px;top:553px;width:14px;height:14px;background:#ECE9D8;border:1px solid #4a483f;box-shadow:inset 1px 1px 0 #fff'>
<svg width='12' height='12' style='position:absolute;left:0;top:0'><path d='M3 3L9.2 9M9.2 3L3 9' stroke='#2a261c' stroke-width='1.9'/></svg>
</div>
<div class='a' style='left:142px;top:570px;width:579px;height:362px;background:#fff'></div>
<div class='a' style='left:721px;top:570px;width:17px;height:362px;background:#F2F0E4;border-left:1px solid #D5D2C2'></div>
<div class='btn2' style='left:722px;top:571px;width:16px;height:17px;'></div>
<svg class='a' style='left:726px;top:575px' width='9' height='9' viewBox='0 0 9 9'><path d='M4.5 0.5L8.5 5H6V8H3V5H0.5z' fill='#000'/></svg>
<div class='btn2' style='left:722px;top:915px;width:16px;height:17px;'></div>
<svg class='a' style='left:726px;top:919px' width='9' height='9' viewBox='0 0 9 9'><path d='M4.5 8.5L8.5 4H6V1H3V4H0.5z' fill='#000'/></svg>
<div class='a' style='left:722px;top:588px;width:16px;height:154px;background:#DAD6C0'></div>
<div class='a' style='left:143px;top:662px;width:578px;height:210px;background:#000'></div>
<div class='a' style='left:143px;top:872px;width:379px;height:15px;background:#000'></div>
<div class='a mono' style='left:144px;top:574px;height:15px;line-height:15px;white-space:pre;'>[Tab]           Completes the command/word. If the input is ambigous,</div>
<div class='a mono' style='left:144px;top:589px;height:15px;line-height:15px;white-space:pre;'>                a second [Tab] gives possible options</div>
<div class='a mono' style='left:144px;top:619px;height:15px;line-height:15px;white-space:pre;'>/               Move up to base level</div>
<div class='a mono' style='left:144px;top:634px;height:15px;line-height:15px;white-space:pre;'>..              Move up one level</div>
<div class='a mono' style='left:144px;top:649px;height:15px;line-height:15px;white-space:pre;'>/command        Use command at the base level</div>
<div class='a mono' style='left:144px;top:664px;height:15px;line-height:15px;white-space:pre;'><span style='color:#fff;'>[</span><span style='color:#fff;background:#0C9494'>admin</span><span style='color:#fff;'>@</span><span style='color:#fff;background:#0A900A'>MikroTik</span><span style='color:#fff;'>] &gt; </span><span style='color:#fff;background:#A000A0'>ping</span><span style='color:#fff;'> ya.ru</span></div>
<div class='a mono' style='left:144px;top:679px;height:15px;line-height:15px;white-space:pre;font-weight:bold;'><span style='color:#fff;'>HOST                                     SIZE TTL TIME  STATUS</span></div>
<div class='a mono' style='left:144px;top:694px;height:15px;line-height:15px;white-space:pre;'><span style='color:#fff;'>87.250.251.3                                            timeout</span></div>
<div class='a mono' style='left:144px;top:709px;height:15px;line-height:15px;white-space:pre;'><span style='color:#fff;'>87.250.251.3                                            timeout</span></div>
<div class='a mono' style='left:144px;top:724px;height:15px;line-height:15px;white-space:pre;'><span style='color:#fff;'>87.250.251.3                                            timeout</span></div>
<div class='a mono' style='left:144px;top:739px;height:15px;line-height:15px;white-space:pre;'><span style='color:#fff;'>    </span><span style='color:#fff;background:#0A900A'>sent=</span><span style='color:#fff;'>3</span><span style='color:#fff;'> </span><span style='color:#fff;background:#0A900A'>received=</span><span style='color:#fff;'>0</span><span style='color:#fff;'> </span><span style='color:#fff;background:#0A900A'>packet-loss=</span><span style='color:#fff;'>100%</span></div>
<div class='a mono' style='left:144px;top:769px;height:15px;line-height:15px;white-space:pre;'><span style='color:#fff;'>[</span><span style='color:#fff;background:#0C9494'>admin</span><span style='color:#fff;'>@</span><span style='color:#fff;background:#0A900A'>MikroTik</span><span style='color:#fff;'>] &gt; </span><span style='color:#fff;background:#A000A0'>ping</span><span style='color:#fff;'> bisv.ru</span></div>
<div class='a mono' style='left:144px;top:784px;height:15px;line-height:15px;white-space:pre;font-weight:bold;'><span style='color:#fff;'>HOST                                     SIZE TTL TIME  STATUS</span></div>
<div class='a mono' style='left:144px;top:799px;height:15px;line-height:15px;white-space:pre;'><span style='color:#fff;'>109.235.186.253                            56  62 0ms</span></div>
<div class='a mono' style='left:144px;top:814px;height:15px;line-height:15px;white-space:pre;'><span style='color:#fff;'>109.235.186.253                            56  62 0ms</span></div>
<div class='a mono' style='left:144px;top:829px;height:15px;line-height:15px;white-space:pre;'><span style='color:#fff;'>109.235.186.253                            56  62 1ms</span></div>
<div class='a mono' style='left:144px;top:844px;height:15px;line-height:15px;white-space:pre;'><span style='color:#fff;'>109.235.186.253                            56  62 0ms</span></div>
<div class='a mono' style='left:144px;top:859px;height:15px;line-height:15px;white-space:pre;'><span style='color:#fff;'>109.235.186.253                            56  62 0ms</span></div>
<div class='a mono' style='left:144px;top:874px;height:15px;line-height:15px;white-space:pre;'><span style='color:#fff;'>109.235.186.253                            56  62 0ms</span></div>
<div class='a mono' style='left:144px;top:889px;height:15px;line-height:15px;white-space:pre;'>    <span style='color:#1F8A1F'>sent=</span>6 <span style='color:#1F8A1F'>received=</span>6 <span style='color:#1F8A1F'>packet-loss=</span>0% <span style='color:#1F8A1F'>min-rtt=</span>0ms <span style='color:#1F8A1F'>avg-rtt=</span>0ms <span style='color:#1F8A1F'>max-rtt=</span>1ms</div>
<div class='a mono' style='left:144px;top:919px;height:15px;line-height:15px;white-space:pre;'>[<span style='color:#008B8B'>admin</span>@<span style='color:#1F8A1F'>MikroTik</span>] &gt; </div>
<div class='a' style='left:277px;top:918px;width:7px;height:13px;background:#F080C0'></div>
<div class='a' style='left:140px;top:191px;width:671px;height:370px;background:#ECE9D8;border:1px solid #000'></div>
<div class='a' style='left:141px;top:192px;width:669px;height:21px;background:#BDB9AB'></div>
<div class='t' style='left:146px;top:197px;color:#fff'>Route List</div>
<div class='a' style='left:775px;top:196px;width:14px;height:14px;background:#ECE9D8;border:1px solid #4a483f;box-shadow:inset 1px 1px 0 #fff'>
<svg width='12' height='12' style='position:absolute;left:0;top:0'><rect x='2.5' y='2.5' width='7.5' height='7' fill='none' stroke='#2a261c' stroke-width='1'/><path d='M2 3h8.5' stroke='#2a261c' stroke-width='1.8'/></svg>
</div>
<div class='a' style='left:792px;top:196px;width:14px;height:14px;background:#ECE9D8;border:1px solid #4a483f;box-shadow:inset 1px 1px 0 #fff'>
<svg width='12' height='12' style='position:absolute;left:0;top:0'><path d='M3 3L9.2 9M9.2 3L3 9' stroke='#2a261c' stroke-width='1.9'/></svg>
</div>
<div class='a' style='left:143px;top:238px;width:664px;height:1px;background:#fff'></div>
<div class='a' style='left:807px;top:239px;width:1px;height:318px;background:#CFCCBC'></div>
<div class='tabA' style='left:144px;top:216px;width:49px;height:23px'></div>
<div class='t' style='left:151.5px;top:220px;font-size:11px;letter-spacing:-0.171px;'>Routes</div>
<div class='tab' style='left:194px;top:219px;width:53px;height:19px'></div>
<div class='t' style='left:197.5px;top:222px;font-size:11px;letter-spacing:-0.210px;'>Nexthops</div>
<div class='tab' style='left:249px;top:219px;width:37px;height:19px'></div>
<div class='t' style='left:254.5px;top:222px;font-size:11px;letter-spacing:-0.406px;'>Rules</div>
<div class='tab' style='left:288px;top:219px;width:32px;height:19px'></div>
<div class='t' style='left:293px;top:222px;font-size:11px;letter-spacing:-0.250px;'>VRF</div>
<div class='btn2' style='left:146px;top:242px;width:22px;height:23px'><svg width='16' height='16' style='position:absolute;left:2px;top:3px'><path d='M5.4 2.6h4.6v3.8h3.8v4.6h-3.8v3.8H5.4v-3.8H1.6V6.4h3.8z' fill='#0808C8' stroke='#04046a' stroke-width='0.9'/></svg></div>
<div class='btn2' style='left:171px;top:242px;width:22px;height:23px'><svg width='16' height='16' style='position:absolute;left:2px;top:3px'><rect x='3' y='7' width='12' height='4' fill='#F4F2E6' stroke='#B0AD9E' stroke-width='1'/></svg></div>
<div class='btn2' style='left:203px;top:242px;width:22px;height:23px'><svg width='16' height='16' style='position:absolute;left:2px;top:3px'><path d='M3.4 8.5l4.2 4.2 7-7.8' fill='none' stroke='#B4B1A2' stroke-width='2.8'/><path d='M3.4 8.5l4.2 4.2 7-7.8' fill='none' stroke='#F4F2E6' stroke-width='1.2'/></svg></div>
<div class='btn2' style='left:229px;top:242px;width:22px;height:23px'><svg width='16' height='16' style='position:absolute;left:2px;top:3px'><path d='M3.4 4.3l10.6 9.8M14 4.3L3.4 14.1' fill='none' stroke='#B8B5A6' stroke-width='2.8'/><path d='M3.4 4.3l10.6 9.8M14 4.3L3.4 14.1' fill='none' stroke='#F4F2E6' stroke-width='1.2'/></svg></div>
<div class='btn2' style='left:261px;top:242px;width:22px;height:23px'><svg width='16' height='16' style='position:absolute;left:2px;top:3px'><path d='M2.5 13.3V7L5.4 4.3H15v9z' fill='#F4F2E6' stroke='#8E8B7C' stroke-width='1'/><path d='M8 6.4h5M8 8.2h5' stroke='#A8A596' stroke-width='0.9'/></svg></div>
<div class='btn2' style='left:293px;top:242px;width:22px;height:23px'><svg width='16' height='16' style='position:absolute;left:2px;top:3px'><path d='M2.9 3.6h12.4v1.6L10.9 9.6v5.6H7.3V9.6L2.9 5.2z' fill='#7088AC' stroke='#1c1c24' stroke-width='1.3'/><path d='M3 4h12.2' stroke='#1c1c24' stroke-width='1.6'/></svg></div>
<div class='inp' style='left:687px;top:244px;width:60px;height:18px;'></div>
<div class='t' style='left:693px;top:246px;font-style:italic;color:#b0ada0;'>Find</div>
<div class='inp' style='left:754px;top:244px;width:32px;height:18px;'></div>
<div class='t' style='left:758px;top:246px;'>all</div>
<div class='btn2' style='left:787px;top:244px;width:18px;height:18px'><svg width='12' height='12' style='position:absolute;left:2px;top:2px'><path d='M2.4 2.6h6.8' stroke='#000' stroke-width='1.1'/><path d='M4.6 4h2.4v2.4h2.4L5.8 10 2.2 6.4h2.4z' fill='#000'/></svg></div>
<div class='a' style='left:145px;top:268px;width:661px;height:268px;background:#fff;border:1px solid #ACA899'></div>
<div class='hdr' style='left:147px;top:269px;width:40px'></div>
<div class='hdr' style='left:187px;top:269px;width:100px'></div>
<div class='t' style='left:188.5px;top:271px;font-size:11px;letter-spacing:-0.214px;'>Dst. Address</div>
<div class='hdr' style='left:287px;top:269px;width:299px'></div>
<div class='t' style='left:288.5px;top:271px;font-size:11px;letter-spacing:-0.235px;'>Gateway</div>
<div class='hdr' style='left:586px;top:269px;width:60px'></div>
<div class='t' style='left:588.5px;top:271px;font-size:11px;letter-spacing:-0.114px;'>Distance</div>
<div class='hdr' style='left:646px;top:269px;width:80px'></div>
<div class='t' style='left:648.5px;top:271px;font-size:11px;letter-spacing:-0.174px;'>Routing Mark</div>
<div class='hdr' style='left:726px;top:269px;width:64px'></div>
<div class='t' style='left:728.5px;top:271px;font-size:11px;letter-spacing:-0.195px;'>Pref. Source</div>
<div class='hdr' style='left:790px;top:269px;width:16px'></div>
<svg class='a' style='left:793px;top:275px' width='9' height='6' viewBox='0 0 9 6'><path d='M0 0h9L4.5 5z' fill='#000'/></svg>
<svg class='a' style='left:273px;top:274px' width='8' height='7' viewBox='0 0 8 7'><path d='M4 0.5L7.5 6.5H0.5z' fill='#f6f5ee' stroke='#c2bfb0'/></svg>
<div class='a' style='left:146px;top:300px;width:659px;height:1px;background:#ECEAE0'></div>
<div class='t' style='left:148.5px;top:286px;font-size:11px;letter-spacing:-1.337px;color:#3535A4;'>S</div>
<svg class='a' style='left:193px;top:287px' width='10' height='12' viewBox='0 0 10 12'><path d='M1 0.5v11' stroke='#000' stroke-width='1.4'/><path d='M2 1.6L8.4 5 2 8.4z' fill='#1FDA1F' stroke='#083808' stroke-width='0.9'/></svg>
<div class='t' style='left:204.5px;top:286px;font-size:11px;letter-spacing:0.148px;color:#3535A4;'>0.0.0.0/0</div>
<div class='t' style='left:288.5px;top:286px;font-size:11px;letter-spacing:-0.143px;color:#3535A4;'>BIZNESSVYAZ reachable</div>
<div class='t' style='left:636.5px;top:286px;font-size:11px;letter-spacing:0.382px;color:#3535A4;'>1</div>
<div class='a' style='left:146px;top:315px;width:659px;height:1px;background:#ECEAE0'></div>
<div class='t' style='left:148.5px;top:301px;font-size:11px;letter-spacing:-0.809px;'>DAS</div>
<svg class='a' style='left:193px;top:302px' width='10' height='12' viewBox='0 0 10 12'><path d='M1 0.5v11' stroke='#000' stroke-width='1.4'/><path d='M2 1.6L8.4 5 2 8.4z' fill='#1FDA1F' stroke='#083808' stroke-width='0.9'/></svg>
<div class='t' style='left:204.5px;top:301px;font-size:11px;letter-spacing:0.148px;'>0.0.0.0/0</div>
<div class='t' style='left:288.5px;top:301px;font-size:11px;letter-spacing:-0.153px;'>10.10.231.1 reachable ether1-gateway</div>
<div class='t' style='left:636.5px;top:301px;font-size:11px;letter-spacing:0.382px;'>1</div>
<div class='a' style='left:146px;top:330px;width:659px;height:1px;background:#ECEAE0'></div>
<div class='t' style='left:148.5px;top:316px;font-size:11px;letter-spacing:-1.281px;color:#3535A4;'>DS</div>
<svg class='a' style='left:193px;top:317px' width='10' height='12' viewBox='0 0 10 12'><path d='M1 0.5v11' stroke='#000' stroke-width='1.4'/><path d='M2 1.6L8.4 5 2 8.4z' fill='#1FDA1F' stroke='#083808' stroke-width='0.9'/></svg>
<div class='t' style='left:204.5px;top:316px;font-size:11px;letter-spacing:0.148px;color:#3535A4;'>0.0.0.0/0</div>
<div class='t' style='left:288.5px;top:316px;font-size:11px;letter-spacing:-0.124px;color:#3535A4;'>10.1.1.1 unreachable</div>
<div class='t' style='left:636.5px;top:316px;font-size:11px;letter-spacing:0.382px;color:#3535A4;'>1</div>
<div class='a' style='left:146px;top:345px;width:659px;height:1px;background:#ECEAE0'></div>
<div class='t' style='left:148.5px;top:331px;font-size:11px;letter-spacing:-0.862px;'>DAC</div>
<svg class='a' style='left:193px;top:332px' width='10' height='12' viewBox='0 0 10 12'><path d='M1 0.5v11' stroke='#000' stroke-width='1.4'/><path d='M2 1.6L8.4 5 2 8.4z' fill='#1FDA1F' stroke='#083808' stroke-width='0.9'/></svg>
<div class='t' style='left:204.5px;top:331px;font-size:11px;letter-spacing:-0.322px;'>10.1.1.1</div>
<div class='t' style='left:288.5px;top:331px;font-size:11px;letter-spacing:-0.143px;'>BIZNESSVYAZ reachable</div>
<div class='t' style='left:636.5px;top:331px;font-size:11px;letter-spacing:0.382px;'>0</div>
<div class='t' style='left:728.5px;top:331px;font-size:11px;letter-spacing:-0.157px;'>10.10.197.57</div>
<div class='a' style='left:146px;top:360px;width:659px;height:1px;background:#ECEAE0'></div>
<div class='t' style='left:148.5px;top:346px;font-size:11px;letter-spacing:-0.862px;'>DAC</div>
<svg class='a' style='left:193px;top:347px' width='10' height='12' viewBox='0 0 10 12'><path d='M1 0.5v11' stroke='#000' stroke-width='1.4'/><path d='M2 1.6L8.4 5 2 8.4z' fill='#1FDA1F' stroke='#083808' stroke-width='0.9'/></svg>
<div class='t' style='left:204.5px;top:346px;font-size:11px;letter-spacing:0.008px;'>10.10.231.0/24</div>
<div class='t' style='left:288.5px;top:346px;font-size:11px;letter-spacing:-0.182px;'>ether1-gateway reachable</div>
<div class='t' style='left:636.5px;top:346px;font-size:11px;letter-spacing:0.382px;'>0</div>
<div class='t' style='left:728.5px;top:346px;font-size:11px;letter-spacing:-0.157px;'>10.10.231.74</div>
<div class='a' style='left:146px;top:375px;width:659px;height:1px;background:#ECEAE0'></div>
<div class='t' style='left:148.5px;top:361px;font-size:11px;letter-spacing:-0.862px;'>DAC</div>
<svg class='a' style='left:193px;top:362px' width='10' height='12' viewBox='0 0 10 12'><path d='M1 0.5v11' stroke='#000' stroke-width='1.4'/><path d='M2 1.6L8.4 5 2 8.4z' fill='#1FDA1F' stroke='#083808' stroke-width='0.9'/></svg>
<div class='t' style='left:204.5px;top:361px;font-size:11px;letter-spacing:-0.030px;'>192.168.88.0/...</div>
<div class='t' style='left:288.5px;top:361px;font-size:11px;letter-spacing:-0.202px;'>bridge-local reachable</div>
<div class='t' style='left:636.5px;top:361px;font-size:11px;letter-spacing:0.382px;'>0</div>
<div class='t' style='left:728.5px;top:361px;font-size:11px;letter-spacing:-0.203px;'>192.168.88.1</div>
<div class='a' style='left:186px;top:286px;width:1px;height:90px;background:#ECEAE0'></div>
<div class='a' style='left:286px;top:286px;width:1px;height:90px;background:#ECEAE0'></div>
<div class='a' style='left:585px;top:286px;width:1px;height:90px;background:#ECEAE0'></div>
<div class='a' style='left:645px;top:286px;width:1px;height:90px;background:#ECEAE0'></div>
<div class='a' style='left:725px;top:286px;width:1px;height:90px;background:#ECEAE0'></div>
<div class='a' style='left:146px;top:519px;width:659px;height:16px;background:#F2F0E4;border-top:1px solid #D5D2C2'></div>
<div class='btn2' style='left:146px;top:519px;width:16px;height:16px;'></div>
<svg class='a' style='left:149px;top:523px' width='9' height='9' viewBox='0 0 9 9'><path d='M0.5 4.5L5 0.5V3H8V6H5V8.5z' fill='#000'/></svg>
<div class='btn2' style='left:789px;top:519px;width:16px;height:16px;'></div>
<svg class='a' style='left:793px;top:523px' width='9' height='9' viewBox='0 0 9 9'><path d='M8.5 4.5L4 0.5V3H1V6H4V8.5z' fill='#000'/></svg>
<div class='a' style='left:754px;top:520px;width:35px;height:15px;background:#D5D2BE'></div>
<div class='a' style='left:143px;top:556px;width:665px;height:1px;background:#CFCCBC'></div>
<div class='t' style='left:148px;top:538px;'>6 items</div>
<div class='a' style='left:810px;top:193px;width:397px;height:428px;background:#ECE9D8;border:1px solid #000'></div>
<div class='a' style='left:811px;top:194px;width:395px;height:22px;background:#5050D2'></div>
<div class='t' style='left:817px;top:199px;color:#fff'>Interface &lt;BIZNESSVYAZ&gt;</div>
<div class='a' style='left:1171px;top:198px;width:14px;height:14px;background:#FBFAF4;border:1px solid #3C3CA0'>
<svg width='12' height='12' style='position:absolute;left:0;top:0'><rect x='2.5' y='2.5' width='7.5' height='7' fill='none' stroke='#2a261c' stroke-width='1'/><path d='M2 3h8.5' stroke='#2a261c' stroke-width='1.8'/></svg>
</div>
<div class='a' style='left:1188px;top:198px;width:14px;height:14px;background:#FBFAF4;border:1px solid #3C3CA0'>
<svg width='12' height='12' style='position:absolute;left:0;top:0'><path d='M3 3L9.2 9M9.2 3L3 9' stroke='#2a261c' stroke-width='1.9'/></svg>
</div>
<div class='a' style='left:814px;top:240px;width:312px;height:356px;background:#ECE9D8;border:1px solid #fff;border-right-color:#ACA899;border-bottom-color:#ACA899'></div>
<div class='tab' style='left:816px;top:221px;width:46px;height:19px'></div>
<div class='t' style='left:821.5px;top:224px;font-size:11px;letter-spacing:-0.356px;'>General</div>
<div class='tabA' style='left:863px;top:218px;width:52px;height:23px'></div>
<div class='t' style='left:870.5px;top:222px;font-size:11px;letter-spacing:-0.319px;'>Dial Out</div>
<div class='tab' style='left:916px;top:221px;width:40px;height:19px'></div>
<div class='t' style='left:920.5px;top:224px;font-size:11px;letter-spacing:-0.237px;'>Status</div>
<div class='tab' style='left:957px;top:221px;width:41px;height:19px'></div>
<div class='t' style='left:963px;top:224px;font-size:11px;letter-spacing:-0.158px;'>Traffic</div>
<div class='t' style='left:876.5px;top:251px;font-size:11px;letter-spacing:-0.000px;'>Connect To:</div>
<div class='inp' style='left:942px;top:248px;width:175px;height:18px;'></div>
<div class='a' style='left:945px;top:250px;width:40px;height:14px;background:#316AC5'></div>
<div class='t' style='left:946.5px;top:250px;font-size:11px;letter-spacing:-0.394px;color:#fff'>10.1.1.1</div>
<div class='a' style='left:821px;top:275px;width:296px;height:1px;background:#D5D2C2'></div>
<div class='t' style='left:635px;top:286px;width:300px;text-align:right'>User:</div>
<div class='inp' style='left:942px;top:283px;width:175px;height:18px;'></div>
<div class='t' style='left:946px;top:285px;'>50165</div>
<div class='t' style='left:635px;top:311px;width:300px;text-align:right'>Password:</div>
<div class='inp' style='left:942px;top:308px;width:157px;height:18px;'></div>
<div class='t' style='left:946px;top:310px;font-size:9px;letter-spacing:0.3px;line-height:11px;height:11px'>*****</div>
<svg class='a' style='left:1104px;top:314px' width='10' height='8' viewBox='0 0 10 8'><path d='M0 6L4.5 1l4.5 5z' fill='#000'/></svg>
<div class='t' style='left:635px;top:337px;width:300px;text-align:right'>Profile:</div>
<div class='inp' style='left:942px;top:334px;width:156px;height:18px;'></div>
<div class='t' style='left:946px;top:336px;'>default-encryption</div>
<div class='btn2' style='left:1099px;top:334px;width:18px;height:18px'><svg width='12' height='12' style='position:absolute;left:2px;top:2px'><path d='M2.4 2.6h6.8' stroke='#000' stroke-width='1.1'/><path d='M4.6 4h2.4v2.4h2.4L5.8 10 2.2 6.4h2.4z' fill='#000'/></svg></div>
<div class='t' style='left:635px;top:362px;width:300px;text-align:right'>Keepalive Timeout:</div>
<div class='inp' style='left:942px;top:359px;width:157px;height:18px;'></div>
<div class='t' style='left:946px;top:361px;'>60</div>
<svg class='a' style='left:1104px;top:365px' width='10' height='8' viewBox='0 0 10 8'><path d='M0 6L4.5 1l4.5 5z' fill='#000'/></svg>
<div class='a' style='left:821px;top:387px;width:296px;height:1px;background:#D5D2C2'></div>
<div class='cb' style='left:942px;top:395px'></div>
<div class='t' style='left:960px;top:395px;'>Dial On Demand</div>
<div class='cb' style='left:942px;top:414px'><svg width='11' height='11' viewBox='0 0 12 12' style='position:absolute;left:0;top:0'><path d='M2.5 5.5 L5 8 L9.5 3.5' fill='none' stroke='#000' stroke-width='2.1'/></svg></div>
<div class='t' style='left:960px;top:414px;'>Add Default Route</div>
<div class='t' style='left:635px;top:436px;width:300px;text-align:right'>Default Route Distance:</div>
<div class='inp' style='left:942px;top:433px;width:175px;height:18px;'></div>
<div class='t' style='left:946px;top:435px;'>1</div>
<div class='a' style='left:821px;top:461px;width:296px;height:1px;background:#D5D2C2'></div>
<div class='a' style='left:821px;top:474px;width:296px;height:1px;background:#C5C2B2'></div>
<div class='t' style='left:826px;top:467px;background:#ECE9D8;padding:0 3px'>Allow</div>
<div class='cb' style='left:827px;top:486px'><svg width='11' height='11' viewBox='0 0 12 12' style='position:absolute;left:0;top:0'><path d='M2.5 5.5 L5 8 L9.5 3.5' fill='none' stroke='#000' stroke-width='2.1'/></svg></div>
<div class='t' style='left:845px;top:486px;'>pap</div>
<div class='cb' style='left:973px;top:486px'><svg width='11' height='11' viewBox='0 0 12 12' style='position:absolute;left:0;top:0'><path d='M2.5 5.5 L5 8 L9.5 3.5' fill='none' stroke='#000' stroke-width='2.1'/></svg></div>
<div class='t' style='left:991px;top:486px;'>chap</div>
<div class='cb' style='left:827px;top:505px'><svg width='11' height='11' viewBox='0 0 12 12' style='position:absolute;left:0;top:0'><path d='M2.5 5.5 L5 8 L9.5 3.5' fill='none' stroke='#000' stroke-width='2.1'/></svg></div>
<div class='t' style='left:845px;top:505px;'>mschap1</div>
<div class='cb' style='left:973px;top:505px'><svg width='11' height='11' viewBox='0 0 12 12' style='position:absolute;left:0;top:0'><path d='M2.5 5.5 L5 8 L9.5 3.5' fill='none' stroke='#000' stroke-width='2.1'/></svg></div>
<div class='t' style='left:991px;top:505px;'>mschap2</div>
<div class='btn2' style='left:1136px;top:221px;width:63px;height:23px;text-align:center;line-height:21px;border-color:#000;box-shadow:inset 1px 1px 0 #fff, inset -1px -1px 0 #8E8B7C'>OK</div>
<div class='btn2' style='left:1136px;top:247px;width:63px;height:23px;text-align:center;line-height:21px;border-color:#A3A090'>Cancel</div>
<div class='btn2' style='left:1136px;top:273px;width:63px;height:23px;text-align:center;line-height:21px;border-color:#A3A090'>Apply</div>
<div class='btn2' style='left:1136px;top:305px;width:63px;height:23px;text-align:center;line-height:21px;border-color:#A3A090'>Disable</div>
<div class='btn2' style='left:1136px;top:331px;width:63px;height:23px;text-align:center;line-height:21px;border-color:#A3A090'>Comment</div>
<div class='btn2' style='left:1136px;top:357px;width:63px;height:23px;text-align:center;line-height:21px;border-color:#A3A090'>Copy</div>
<div class='btn2' style='left:1136px;top:383px;width:63px;height:23px;text-align:center;line-height:21px;border-color:#A3A090'>Remove</div>
<div class='btn2' style='left:1136px;top:415px;width:63px;height:23px;text-align:center;line-height:21px;border-color:#A3A090'>Torch</div>
<div class='a' style='left:812px;top:598px;width:92px;height:20px;border:1px solid;border-color:#ACA899 #fff #fff #ACA899;line-height:19px;padding-left:4px;color:#000'>enabled</div>
<div class='a' style='left:906px;top:598px;width:91px;height:20px;border:1px solid;border-color:#ACA899 #fff #fff #ACA899;line-height:19px;padding-left:4px;color:#000'>running</div>
<div class='a' style='left:999px;top:598px;width:91px;height:20px;border:1px solid;border-color:#ACA899 #fff #fff #ACA899;line-height:19px;padding-left:4px;color:#b4b1a3'>slave</div>
<div class='a' style='left:1092px;top:598px;width:113px;height:20px;border:1px solid;border-color:#ACA899 #fff #fff #ACA899;line-height:19px;padding-left:4px;color:#000'>Status: connected</div>
<div class='a' style='left:0px;top:993px;width:1280px;height:1px;background:#FBFAF5'></div>
<div class='a' style='left:0px;top:994px;width:1280px;height:30px;background:linear-gradient(to bottom,#2559CD 0px,#3E8AE6 1.5px,#3F8DE8 3px,#2A62DA 4.5px,#2456D6 6px,#2458DA 10px,#2260E2 16px,#2866E0 24px,#2860D8 27px,#1940A8 30px)'></div>
<div class='a' style='left:0;top:994px;width:95px;height:30px;border-radius:0 12px 12px 0;background:linear-gradient(#388E3A 0%,#5CB85C 8%,#3C9A3C 20%,#379537 60%,#2F852F 90%,#236b23 100%);box-shadow:inset -3px 0 4px rgba(0,0,0,0.25),1px 0 2px rgba(0,0,0,.4)'></div>
<svg class='a' style='left:10px;top:999px' width='19' height='19' viewBox='0 0 19 19'><path d='M2.5 2.5 Q5.5 0.5 9 2.5 L8 8.5 Q4.5 6.5 1.5 8.5Z' fill='#E8572A'/><path d='M10.3 3 Q13.5 5 17.5 3 L16.5 9 Q13 11 9.3 9Z' fill='#7CC63B'/><path d='M1.2 9.8 Q4.4 7.8 7.8 9.8 L6.8 15.8 Q3.4 13.8 0.2 15.8Z' fill='#4A8CF0'/><path d='M9 10.3 Q12.6 12.3 16.2 10.3 L15.2 16.3 Q11.6 18.3 8 16.3Z' fill='#F5C634'/></svg>
<div class='t' style='left:34.5px;top:999px;font-size:17px;letter-spacing:-0.137px;font-weight:bold;font-style:italic;color:#fff;line-height:20px;height:20px;text-shadow:1px 1px 1px #1c4d1c'>пуск</div>
<div class='a' style='left:106px;top:998px;width:158px;height:23px;border-radius:3px;background:linear-gradient(#5A9BF1 0%,#3C81EE 12%,#3078EA 50%,#2F72E2 100%);box-shadow:inset 1px 1px 0 rgba(255,255,255,.25),inset -1px -1px 0 rgba(0,0,0,.2)'></div>
<svg class='a' style='left:115px;top:1001px' width='16' height='16' viewBox='0 0 16 16'><ellipse cx='8' cy='8' rx='7' ry='7.5' fill='#D8261C'/><ellipse cx='8' cy='8' rx='2.6' ry='5.3' fill='#8E1C14'/><ellipse cx='8' cy='8' rx='7' ry='7.5' fill='none' stroke='#8a120c' stroke-width='0.8'/></svg>
<div class='t' style='left:134px;top:1002px;color:#fff;font-size:11px;letter-spacing:0'>Error - Opera</div>
<div class='a' style='left:266px;top:998px;width:158px;height:23px;border-radius:3px;background:linear-gradient(#5A9BF1 0%,#3C81EE 12%,#3078EA 50%,#2F72E2 100%);box-shadow:inset 1px 1px 0 rgba(255,255,255,.25),inset -1px -1px 0 rgba(0,0,0,.2)'></div>
<svg class='a' style='left:275px;top:1001px' width='16' height='16' viewBox='0 0 16 16'><path d='M1 4h5l1.5 2H15v8H1z' fill='#E8C250' stroke='#8a6d1a'/><path d='M1 14l2.5-6H16l-2 6z' fill='#FBE38A' stroke='#8a6d1a'/></svg>
<div class='t' style='left:294px;top:1002px;color:#fff;font-size:11px;letter-spacing:0'>C:\Documents and Se...</div>
<div class='a' style='left:426px;top:998px;width:158px;height:23px;border-radius:3px;background:linear-gradient(#5A9BF1 0%,#3C81EE 12%,#3078EA 50%,#2F72E2 100%);box-shadow:inset 1px 1px 0 rgba(255,255,255,.25),inset -1px -1px 0 rgba(0,0,0,.2)'></div>
<svg class='a' style='left:435px;top:1001px' width='16' height='16' viewBox='0 0 16 16'><rect x='1' y='1' width='14' height='14' rx='3' fill='#2E86E0'/><circle cx='8' cy='8' r='5' fill='#fff'/><path d='M4.5 8h7M4.5 8l2-2M4.5 8l2 2M11.5 8l-2-2M11.5 8l-2 2' stroke='#2E86E0' stroke-width='1.2' fill='none'/></svg>
<div class='t' style='left:454px;top:1002px;color:#fff;font-size:11px;letter-spacing:0'>TeamViewer</div>
<div class='a' style='left:586px;top:998px;width:159px;height:23px;border-radius:3px;background:linear-gradient(#1F4FB8,#1B47A9 50%,#2152BD);box-shadow:inset 1px 1px 2px rgba(0,0,0,.5)'></div>
<svg class='a' style='left:595px;top:1001px' width='16' height='16' viewBox='0 0 16 16'><circle cx='8' cy='8' r='7' fill='#9dbce6' stroke='#e0ecfa'/><path d='M3.5 6 Q5 12 12 12' stroke='#fff' stroke-width='1.8' fill='none'/><path d='M6.5 4.5 Q7.5 9 13 9' stroke='#eef4fc' stroke-width='1.3' fill='none'/></svg>
<div class='t' style='left:614px;top:1002px;color:#fff;font-size:11px;letter-spacing:0'>admin@192.168.88.1...</div>
<div class='t' style='left:1168.5px;top:1002px;font-size:11px;letter-spacing:-2.281px;color:#fff'>EN</div>
<div class='a' style='left:1206px;top:994px;width:74px;height:30px;background:linear-gradient(#1A8FE6 0%,#2BA3F2 6%,#1690E8 14%,#128BE3 50%,#1287DF 85%,#0E6FC2 100%);border-left:1px solid #0c4fa8'></div>
<svg class='a' style='left:1195.5px;top:999.5px' width='20' height='20' viewBox='0 0 20 20'><circle cx='10' cy='10' r='8.6' fill='#3A84F0' stroke='#A8CCF8' stroke-width='1.1'/><path d='M11.5 6L7.5 10l4 4' stroke='#fff' stroke-width='2.1' fill='none'/></svg>
<svg class='a' style='left:1215px;top:1000px' width='18' height='18' viewBox='0 0 18 18'><rect x='4' y='3' width='11.5' height='13' rx='2' fill='#1E5CC8'/><circle cx='9.8' cy='9.6' r='4.2' fill='#f4f8fe'/><path d='M7 9.6h5.6M7 9.6l1.6-1.6M7 9.6l1.6 1.6M12.6 9.6l-1.6-1.6M12.6 9.6l-1.6 1.6' stroke='#1E5CC8' stroke-width='1' fill='none'/><rect x='0.6' y='1.4' width='7.2' height='6.2' fill='#D8261C'/><path d='M3 3.4h2.6M3 5.2h2.6' stroke='#fff' stroke-width='1.1'/></svg>
<div class='t' style='left:1238px;top:1002px;color:#fff;letter-spacing:0'>12:24</div>
</div></body></html>
